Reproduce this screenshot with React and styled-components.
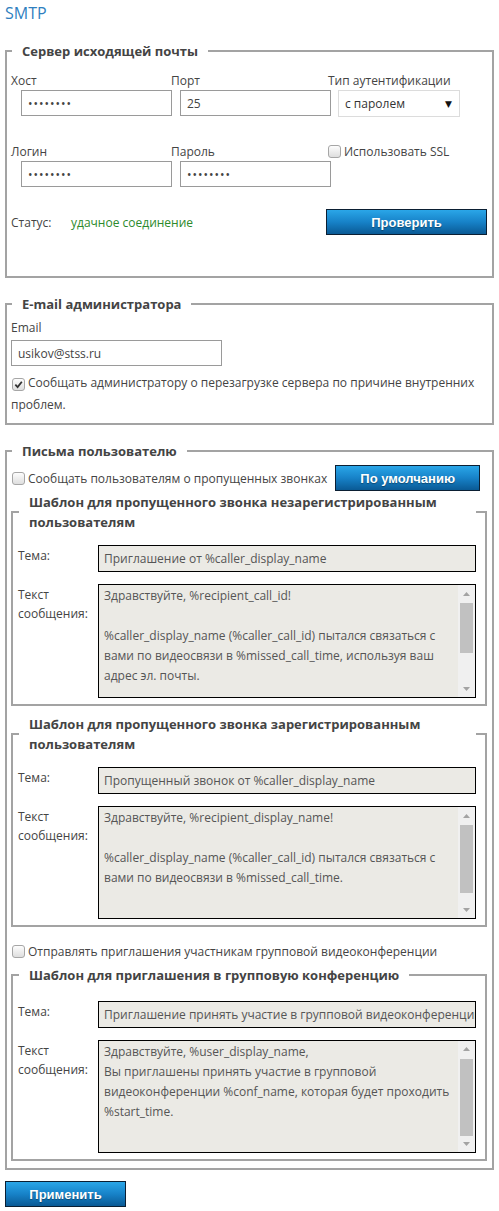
import React from 'react';
import styled, { createGlobalStyle } from 'styled-components';

const GlobalStyle = createGlobalStyle`
  body {
    margin: 0;
    background: #fff;
    font-family: "Open Sans", "DejaVu Sans", sans-serif;
    font-size: 12px;
    color: #444;
  }
  * { box-sizing: border-box; }
`;

const Page = styled.div`
  width: 497px;
  padding: 2px 3px 8px 5px;
`;

const Title = styled.h1`
  margin: 0;
  font-size: 16px;
  font-weight: normal;
  line-height: 22px;
  color: #2f7fbf;
`;

const Fieldset = styled.fieldset`
  margin: ${(p) => p.$mt || 0}px 0 0;
  padding: 0 5px ${(p) => p.$pb || 0}px 4px;
  border: 2px solid #a3a3a3;
  min-width: 0;
`;

const Legend = styled.legend`
  margin-left: 1px;
  padding: 0 10px;
  font-size: 13px;
  font-weight: bold;
  line-height: 20px;
  color: #444;
`;

const InnerFieldset = styled.fieldset`
  margin: ${(p) => p.$mt || 0}px 0 0;
  padding: 0 9px 6px 5px;
  border: 2px solid #a3a3a3;
  min-width: 0;
`;

const ServerGrid = styled.div`
  display: grid;
  grid-template-columns: 160px 157px 1fr;
  row-gap: 25px;
  padding-top: 10px;
`;

const Field = styled.div`
  display: flex;
  flex-direction: column;
  align-items: flex-start;
`;

const Label = styled.label`
  display: block;
  margin-top: ${(p) => p.$mt || 0}px;
  line-height: 19px;
  white-space: nowrap;
`;

const TextInput = styled.input`
  display: block;
  width: ${(p) => p.$w}px;
  height: 26px;
  margin: 0 0 0 ${(p) => p.$indent || 0}px;
  padding: 0 6px;
  border: 1px solid #9a9a9a;
  background: #fff;
  font-family: inherit;
  font-size: 12px;
  color: #444;
  outline: none;

  &[type='password'] {
    letter-spacing: 1px;
  }
`;

const Select = styled.div`
  display: flex;
  align-items: center;
  justify-content: space-between;
  width: 122px;
  height: 27px;
  margin-left: 10px;
  padding: 0 7px 0 6px;
  border: 1px solid #dcdcdc;
  background: #fff;
  color: #333;
`;

const Caret = styled.span`
  font-size: 9px;
  color: #111;
`;

const CheckLine = styled.label`
  display: flex;
  align-items: center;
  gap: 3px;
  line-height: 19px;
  white-space: nowrap;
`;

const Box = styled.span`
  display: inline-flex;
  align-items: center;
  justify-content: center;
  flex: none;
  width: 13px;
  height: 13px;
  margin-left: ${(p) => p.$ml || 0}px;
  border: 1px solid #a6a6a6;
  border-radius: 3px;
  background: linear-gradient(#fdfdfd, #dedede);
  vertical-align: -2px;
`;

const StatusRow = styled.div`
  display: flex;
  align-items: center;
  margin-top: 22px;
`;

const StatusLabel = styled.span`
  width: 60px;
`;

const StatusValue = styled.span`
  flex: 1;
  color: #2c8a2c;
`;

const BlueButton = styled.button`
  width: ${(p) => p.$w}px;
  height: 26px;
  margin: 0;
  padding: 0;
  border: 1px solid #0b1f33;
  background: linear-gradient(#2aa6e8, #1782c8 50%, #0a5a95);
  font-family: "Liberation Sans", Arial, sans-serif;
  font-size: 13px;
  font-weight: bold;
  color: #fff;
  text-shadow: 0 1px 1px rgba(0, 0, 0, 0.35);
  cursor: pointer;
`;

const EmailInput = styled(TextInput)`
  margin-top: 3px;
`;

const Notice = styled.p`
  margin: 6px 0 0;
  line-height: 22px;
`;

const NoticeText = styled.span`
  margin-left: 3px;
`;

const OptionRow = styled.div`
  display: flex;
  align-items: center;
  gap: 8px;
  margin-top: ${(p) => p.$mt || 0}px;
`;

const TemplateRow = styled.div`
  display: grid;
  grid-template-columns: 80px 1fr;
  margin-top: ${(p) => p.$mt}px;
`;

const RowLabel = styled.span`
  padding-top: 1px;
  line-height: 19px;
`;

const SubjectBox = styled.div`
  height: 27px;
  padding: 0 5px;
  border: 1px solid #000;
  background: #ebeae5;
  line-height: 25px;
  color: #555;
  white-space: nowrap;
  overflow: hidden;
`;

const MessageBox = styled.div`
  display: flex;
  height: ${(p) => p.$h}px;
  border: 1px solid #000;
  background: #ebeae5;
`;

const MessageText = styled.div`
  flex: 1;
  padding: 1px 5px;
  line-height: 20px;
  color: #555;
  white-space: pre;
  overflow: hidden;
`;

const Scrollbar = styled.div`
  display: flex;
  flex-direction: column;
  width: 17px;
  background: #f0f0f0;
`;

const ScrollArrow = styled.div`
  display: flex;
  align-items: center;
  justify-content: center;
  height: 17px;
`;

const Track = styled.div`
  flex: 1;
  padding: 0 2px;
`;

const Thumb = styled.div`
  height: ${(p) => p.$size}px;
  margin-top: ${(p) => p.$offset}px;
  background: #c1c1c1;
`;

const Footer = styled.div`
  margin-top: 11px;
`;

const Check = ({ checked, ml }) => (
  <Box $ml={ml}>
    {checked && (
      <svg width="9" height="9" viewBox="0 0 10 10">
        <path d="M1.5 5.2 L4 7.8 L8.7 2" fill="none" stroke="#333" strokeWidth="2" />
      </svg>
    )}
  </Box>
);

const Arrow = ({ down }) => (
  <svg width="7" height="4" viewBox="0 0 7 4">
    <path d={down ? 'M0 0 H7 L3.5 4 Z' : 'M0 4 H7 L3.5 0 Z'} fill="#a3a3a3" />
  </svg>
);

const Message = ({ lines, height, thumbOffset, thumbSize }) => (
  <MessageBox $h={height}>
    <MessageText>{lines.join('\n')}</MessageText>
    <Scrollbar>
      <ScrollArrow>
        <Arrow />
      </ScrollArrow>
      <Track>
        <Thumb $offset={thumbOffset} $size={thumbSize} />
      </Track>
      <ScrollArrow>
        <Arrow down />
      </ScrollArrow>
    </Scrollbar>
  </MessageBox>
);

const Template = ({ title, subject, lines, height, thumbOffset, thumbSize, mt, subjectMt = 13 }) => (
  <InnerFieldset $mt={mt}>
    <Legend>{title}</Legend>
    <TemplateRow $mt={subjectMt}>
      <RowLabel>Тема:</RowLabel>
      <SubjectBox>{subject}</SubjectBox>
    </TemplateRow>
    <TemplateRow $mt={12}>
      <RowLabel>
        Текст
        <br />
        сообщения:
      </RowLabel>
      <Message lines={lines} height={height} thumbOffset={thumbOffset} thumbSize={thumbSize} />
    </TemplateRow>
  </InnerFieldset>
);

const App = () => (
  <Page>
    <GlobalStyle />
    <Title>SMTP</Title>

    <Fieldset $mt={17} $pb={41}>
      <Legend>Сервер исходящей почты</Legend>
      <ServerGrid>
        <Field>
          <Label>Хост</Label>
          <TextInput type="password" defaultValue="12345678" $w={151} $indent={10} />
        </Field>
        <Field>
          <Label>Порт</Label>
          <TextInput type="text" defaultValue="25" $w={151} $indent={9} />
        </Field>
        <Field>
          <Label>Тип аутентификации</Label>
          <Select>
            с паролем
            <Caret>▼</Caret>
          </Select>
        </Field>
        <Field>
          <Label>Логин</Label>
          <TextInput type="password" defaultValue="12345678" $w={151} $indent={10} />
        </Field>
        <Field>
          <Label>Пароль</Label>
          <TextInput type="password" defaultValue="12345678" $w={151} $indent={9} />
        </Field>
        <Field>
          <CheckLine>
            <Check />
            Использовать SSL
          </CheckLine>
        </Field>
      </ServerGrid>
      <StatusRow>
        <StatusLabel>Статус:</StatusLabel>
        <StatusValue>удачное соединение</StatusValue>
        <BlueButton $w={161}>Проверить</BlueButton>
      </StatusRow>
    </Fieldset>

    <Fieldset $mt={16} $pb={7}>
      <Legend>E-mail администратора</Legend>
      <Label $mt={4}>Email</Label>
      <EmailInput type="text" defaultValue="usikov@stss.ru" $w={211} />
      <Notice>
        <Check checked ml={1} />
        <NoticeText>Сообщать администратору о перезагрузке сервера по причине внутренних проблем.</NoticeText>
      </Notice>
    </Fieldset>

    <Fieldset $mt={16} $pb={7}>
      <Legend>Письма пользователю</Legend>
      <OptionRow $mt={4}>
        <CheckLine>
          <Check ml={1} />
          Сообщать пользователям о пропущенных звонках
        </CheckLine>
        <BlueButton type="button" $w={145}>По умолчанию</BlueButton>
      </OptionRow>

      <Template
        mt={1}
        title="Шаблон для пропущенного звонка незарегистрированным пользователям"
        subject="Приглашение от %caller_display_name"
        lines={[
          'Здравствуйте, %recipient_call_id!',
          '',
          '%caller_display_name (%caller_call_id) пытался связаться с',
          'вами по видеосвязи в %missed_call_time, используя ваш',
          'адрес эл. почты.',
        ]}
        height={114}
        thumbOffset={1}
        thumbSize={50}
      />

      <Template
        mt={8}
        title="Шаблон для пропущенного звонка зарегистрированным пользователям"
        subject="Пропущенный звонок от %caller_display_name"
        lines={[
          'Здравствуйте, %recipient_display_name!',
          '',
          '%caller_display_name (%caller_call_id) пытался связаться с',
          'вами по видеосвязи в %missed_call_time.',
        ]}
        height={113}
        thumbOffset={1}
        thumbSize={68}
      />

      <OptionRow $mt={15}>
        <CheckLine>
          <Check ml={1} />
          Отправлять приглашения участникам групповой видеоконференции
        </CheckLine>
      </OptionRow>

      <Template
        mt={4}
        subjectMt={16}
        title="Шаблон для приглашения в групповую конференцию"
        subject="Приглашение принять участие в групповой видеоконференции"
        lines={[
          'Здравствуйте, %user_display_name,',
          'Вы приглашены принять участие в групповой',
          'видеоконференции %conf_name, которая будет проходить',
          '%start_time.',
        ]}
        height={113}
        thumbOffset={1}
        thumbSize={77}
      />
    </Fieldset>

    <Footer>
      <BlueButton type="button" $w={121}>Применить</BlueButton>
    </Footer>
  </Page>
);

export default App;
